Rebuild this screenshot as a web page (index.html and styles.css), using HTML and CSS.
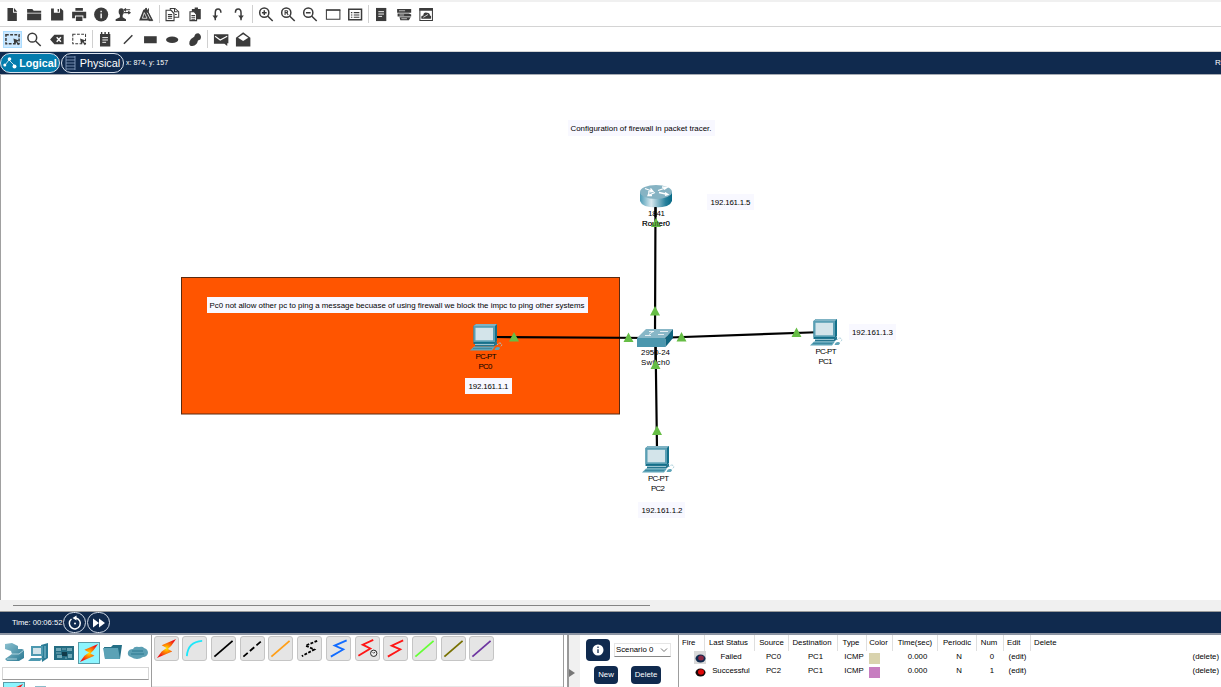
FILE: index.html
```html
<!DOCTYPE html>
<html lang="en">
<head>
<meta charset="utf-8">
<title>Packet Tracer</title>
<link rel="stylesheet" href="styles.css">
</head>
<body>
<svg class="defs" width="0" height="0">
  <defs>
    <linearGradient id="steel" x1="0" x2="1"><stop offset="0" stop-color="#4b9bb5"/><stop offset=".35" stop-color="#d9e9ef"/><stop offset=".8" stop-color="#27809c"/><stop offset="1" stop-color="#076985"/></linearGradient>
    <linearGradient id="teal" x1="0" x2="1" y2="1"><stop offset="0" stop-color="#8cc1d0"/><stop offset="1" stop-color="#2a7892"/></linearGradient>
    <radialGradient id="fire"><stop offset="0" stop-color="#ffe600"/><stop offset=".4" stop-color="#ff8a00"/><stop offset="1" stop-color="#f01818"/></radialGradient>
    <symbol id="pc" viewBox="0 0 34 28">
      <path d="M3.500 2 6 0H27V17L24 20H3.500Z" fill="#14708a"/><path d="M3.500 2 6 0H27L25 2Z" fill="#7fb3c4"/>
      <rect x="3.500" y="2" width="21.500" height="16" fill="#5a9fb4"/><rect x="5.500" y="3.800" width="17.500" height="12.500" fill="#d3e4ea"/>
      <path d="M5 19H24L27 17.500V20.500L24 22.500H5Z" fill="#25768f"/><path d="M5 20.500H24" stroke="#b9dbe4" stroke-width=".8"/>
      <path d="M4 22.500H25L22 26.500H0Z" fill="#5ea4b8"/><path d="M3 24.500H22" stroke="#327f97" stroke-width=".7"/>
      <path d="M24.500 26q1-3.500 4-3t0 3Z" fill="#5ea4b8"/><path d="M27 21q2-3 4-1.500t-1 3.500" fill="none" stroke="#a2cbd7" stroke-dasharray="2 1"/>
    </symbol>
    <symbol id="bolt" viewBox="0 0 22 22"><path d="M21 1 6 7.500 11 10.500 6 14 1 21 17 14 12.500 11.500 16 8Z" fill="url(#fire)"/></symbol>
  </defs>
</svg>
<div class="app">
  <div class="toolbar first">
    <svg class="ic" viewBox="0 0 16 16"><path d="M3 1H9V6H13V15H3Z"/><path d="M10 1 13.500 5H10Z"/></svg>
    <svg class="ic" viewBox="0 0 16 16"><path d="M.5 2H6L7.500 4H15.500V6H.5ZM.5 7H15.500V14H.5Z"/></svg>
    <svg class="ic" viewBox="0 0 16 16"><path fill-rule="evenodd" d="M1.500 1.500H12L14.500 4V14.500H1.500ZM4.500 1.500V6H11V1.500ZM8.500 2H10V5H8.500Z"/></svg>
    <svg class="ic" viewBox="0 0 16 16"><path fill-rule="evenodd" d="M4 1H12V4H4ZM.5 5H15.500V12H12.500V9H3.500V12H.5ZM4.500 10H11.500V15H4.500Z"/></svg>
    <svg class="ic" viewBox="0 0 16 16"><circle cx="8" cy="8" r="7.500"/><path d="M8 6.800V12M8 4V5.500" stroke="#fff" stroke-width="1.500"/></svg>
    <svg class="ic" viewBox="0 0 16 16"><ellipse cx="6" cy="5" rx="2.800" ry="3.700"/><path d="M0 15V13L4.500 11V8H7.500V11L11 13V15Z"/><path d="M9 3H15.500M9 6H15.500M11 1.500 9 3 11 4.500M13.500 4.500 15.500 6 13.500 7.500" class="s"/></svg>
    <svg class="ic" viewBox="0 0 16 16"><path d="M5 3 .5 14.500H11L7 3Z"/><path d="M8 1 15 14.500H11L6.500 3ZM10.500 1.500V5" stroke="#3b3b3b"/><path d="M4 12 6 6 9 12ZM9 6 12.500 13" fill="none" stroke="#fff" stroke-width=".8"/></svg>
    <i class="sep"></i>
    <svg class="ic" viewBox="0 0 16 16"><path d="M6 1.500H11L15 5V11H6Z" class="s"/><path d="M1.500 3.500H7L10 7V14.500H1.500Z" fill="#fff" stroke="#3b3b3b" stroke-width="1.200"/><path d="M3.500 8H8M3.500 10H8M3.500 12H8M10.500 2V5H14M11 8H13" class="s"/></svg>
    <svg class="ic" viewBox="0 0 16 16"><path d="M4.500 2H7.500V.5H11V2H14V13H4.500Z"/><path d="M2.500 5H7L9.500 8V14.500H2.500Z" fill="#fff" stroke="#3b3b3b" stroke-width="1.200"/><path d="M4 9H8M4 11H8M4 13H8" class="s"/></svg>
    <svg class="ic" viewBox="0 0 16 16"><path d="M6 14V6Q6 2 9 2T12 6" class="s b"/><path d="M3 9H9L6 13Z"/></svg>
    <svg class="ic" viewBox="0 0 16 16"><path d="M4 6Q4 2 7 2T10 6V14" class="s b"/><path d="M7 9H13L10 13Z"/></svg>
    <i class="sep"></i>
    <svg class="ic" viewBox="0 0 16 16"><circle cx="6" cy="6" r="4.900" class="s b"/><path d="M9.500 9.500 15 15M3.500 6H8.500M6 3.500V8.500" class="s b"/></svg>
    <svg class="ic" viewBox="0 0 16 16"><circle cx="6" cy="6" r="4.900" class="s b"/><path d="M9.500 9.500 15 15" class="s b"/><path d="M4.700 8.500V4H6.500Q7.500 4 7.500 5T6.500 6H5M6.500 6 8 8.500" class="s"/></svg>
    <svg class="ic" viewBox="0 0 16 16"><circle cx="6" cy="6" r="4.900" class="s b"/><path d="M9.500 9.500 15 15M3.500 6H8.500" class="s b"/></svg>
    <svg class="ic" viewBox="0 0 16 16"><path d="M.8 3H15.200V13H.8Z" class="s"/><path d="M.3 3.500H15.700" class="s" stroke-width="2"/></svg>
    <svg class="ic" viewBox="0 0 16 16"><path d="M1.200 2.500H14.800V13.500H1.200Z" class="s b"/><path d="M3.500 6H5M6.500 6H12.500M3.500 8.500H5M6.500 8.500H12.500M3.500 11H5M6.500 11H12.500" class="s"/></svg>
    <i class="sep"></i>
    <svg class="ic" viewBox="0 0 16 16"><path d="M2.500 1H13.500V15H2.500Z"/><path d="M5 5H11M5 7.500H11M5 10H9" stroke="#fff"/></svg>
    <svg class="ic" viewBox="0 0 16 16"><path d="M.5 2H15.500V6H.5ZM1 7H13L15.500 8V10H1ZM3 11H15L13 14H4Z"/><path d="M2.500 4H9M3 8.500H8M5 12.500H11" stroke="#fff" stroke-width=".7"/></svg>
    <svg class="ic" viewBox="0 0 16 16"><path d="M1.300 2H14.700V14.500H1.300Z" class="s"/><path d="M.8 1H15.200V4H.8ZM3 12.500Q2 9 5 9Q5 5 9 6Q12 6 12 9Q14 9 13 12.500Z"/><path d="M5 11 10 8" stroke="#fff" stroke-width=".8"/></svg>
  </div>
  <div class="toolbar second">
    <span class="picked"><svg class="ic" viewBox="0 0 16 16"><path d="M1 3H15V12.500H1Z" class="s b" stroke-dasharray="3 1.500"/><path d="M9 7 15 9 13 10 15 13 14 14 12 11 10 13Z"/></svg></span>
    <svg class="ic" viewBox="0 0 16 16"><circle cx="6" cy="6" r="4.700" class="s b"/><path d="M9.500 9.500 15 15" class="s b"/></svg>
    <svg class="ic" viewBox="0 0 16 16"><path d="M.5 8 5 3H15V13H5Z"/><path d="M7.500 5.500 12 10.500M12 5.500 7.500 10.500" stroke="#fff" stroke-width="1.500"/></svg>
    <svg class="ic" viewBox="0 0 16 16"><path d="M1.200 2.500H14.800V12.500H1.200Z" class="s" stroke-dasharray="3 1.500"/><path d="M9 7 15 9 13 10 15 13 14 14 12 11 10 13Z"/></svg>
    <i class="sep"></i>
    <svg class="ic" viewBox="0 0 16 16"><path d="M2.500 2H13.500V15.500H2.500ZM3.500 0H5V2H3.500ZM7.200 0H8.700V2H7.200ZM11 0H12.500V2H11Z"/><path d="M5 6H11M5 8.500H11M5 11H9" stroke="#fff"/></svg>
    <svg class="ic" viewBox="0 0 16 16"><path d="M3.500 12.500 12.500 3.500" class="s b"/></svg>
    <svg class="ic" viewBox="0 0 16 16"><path d="M1.500 4.500H15V12H1.500Z"/></svg>
    <svg class="ic" viewBox="0 0 16 16"><ellipse cx="8" cy="8.300" rx="6.500" ry="3.400"/></svg>
    <svg class="ic" viewBox="0 0 16 16"><path d="M7 5Q8 1 12 1.500Q15.500 4 13.500 8L11 9Q10 14 5 15Q1 15 2 10Q3 7 7 5Z"/></svg>
    <i class="sep"></i>
    <svg class="ic" viewBox="0 0 16 16"><path d="M.3 2.500H15.700V12H14.500V15L11.500 12.500H.3Z"/><path d="M1.500 4.500 7 8.500 14.500 4.500" fill="none" stroke="#fff" stroke-width="1.200"/></svg>
    <svg class="ic" viewBox="0 0 16 16"><path d="M.3 6 8 .3 15.700 6V15.500H.3Z"/><path d="M2.500 6 8 2.500 13.500 6 8 9.500Z" fill="#fff"/></svg>
  </div>
  <div class="modebar">
    <span class="mode on"><svg width="14" height="12" viewBox="0 0 14 12"><path d="M2 8 6 3 12 9" fill="none" stroke="#fff" stroke-width=".8"/><circle cx="1.800" cy="8" r="1.500"/><circle cx="6.500" cy="2" r="1.800"/><circle cx="11.500" cy="9.500" r="2"/></svg><b>Logical</b></span>
    <span class="mode"><svg width="11" height="14" viewBox="0 0 11 14"><path d="M1 0V14M10 0V14M1 1H10M1 4H10M1 7H10M1 10H10M1 13H10" stroke="#8fa6c8" stroke-width=".8"/></svg><span>Physical</span></span>
    <span class="coords">x: 874, y: 157</span><span class="root">R<small>o</small></span>
  </div>
  <svg class="topology" width="1221" height="525" viewBox="1 75 1220 525">
    <rect x="181.500" y="277.500" width="438" height="136.500" fill="#ff5500" stroke="#5a2a10"/>
    <g fill="#f8f8ff"><rect x="568" y="120" width="147" height="16"/><rect x="707" y="194" width="47" height="16"/><rect x="207" y="297" width="381" height="16"/><rect x="465" y="378" width="47" height="16"/><rect x="849" y="324" width="47" height="16"/><rect x="638" y="502" width="47" height="16"/></g>
    <g stroke="#000" stroke-width="2.200"><path d="M655.500 205 655 335M494 337 656 338M656 338 824 332M655.500 338 657 450"/></g>
    <g transform="translate(640 184)"><path d="M0 8V17Q2 23.500 16 23.500T32 17V8Z" fill="url(#steel)"/><ellipse cx="16" cy="8" rx="16" ry="7" fill="#86b3c3"/><path d="M5 4.500 13 7.500M10.500 4.500 13 7.500 8 8M27 3.500 18 6.500M22 3 27 3.500 24 5.500M19 8.500 28 10.500M25 11.500 28 10.500 25 8.500M15 8.500 8 11.500M9 9 8 11.500 12 11.500" fill="none" stroke="#fff" stroke-width="1.300"/></g>
    <path d="M655.500 207V217" stroke="#000" stroke-width="2.200"/>
    <use href="#pc" x="470" y="324" width="34" height="28"/>
    <use href="#pc" x="810" y="319" width="34" height="28"/>
    <use href="#pc" x="642" y="446" width="34" height="28"/>
    <g><path d="M637 338 646 329H673L665.500 338Z" fill="#88b7c7"/><path d="M637 338H665.500V347H637Z" fill="#4b97ae"/><path d="M665.500 338 673 329V338L665.500 347Z" fill="#10657e"/><path d="M649 334.500 653 331.500M649 331.500H654M645 335.500H651M658 334.500H664M660 331.500H668" stroke="#fff" stroke-width=".8"/></g>
    <g class="node"><text x="648" y="215.500" textLength="17">1841</text><text x="642" y="225.500" textLength="28">Router0</text><text x="641" y="355" textLength="29">2950-24</text><text x="641" y="365" textLength="29">Switch0</text><text x="475.500" y="359" textLength="21">PC-PT</text><text x="478.500" y="369" textLength="14">PC0</text><text x="815.500" y="354" textLength="21">PC-PT</text><text x="818.500" y="364" textLength="14">PC1</text><text x="648" y="481" textLength="21">PC-PT</text><text x="651" y="491" textLength="14">PC2</text></g>
    <path d="M655.500 347 655.700 365" stroke="#000" stroke-width="2.200"/>
    <g fill="#66bd45"><path d="M656 218 661 227H651ZM655 306 660 315.500H650ZM514 332 519 341.500H509ZM628.500 332.500 633.500 342H623.500ZM681.500 332 686.500 341.500H676.500ZM796.500 327.500 801.500 337H791.500ZM655.500 359.500 660.500 369H650.500ZM657 425.500 662 435H652Z"/></g>
    <g class="node"><text x="642" y="225.500" textLength="28" opacity=".55">Router0</text></g>
    <g class="node"><text x="570.500" y="130.500" textLength="141">Configuration of firewall in packet tracer.</text><text x="209.500" y="308" textLength="375">Pc0 not allow other pc to ping a message becuase of using firewall we block the impc to ping other systems</text><text x="710.500" y="205" textLength="40">192.161.1.5</text><text x="468.500" y="389" textLength="40">192.161.1.1</text><text x="852" y="335" textLength="41">192.161.1.3</text><text x="641.500" y="513" textLength="41">192.161.1.2</text></g>
  </svg>
  <div class="scroll"><i></i></div>
  <div class="timebar"><span>Time: 00:06:52</span>
    <span class="round"><svg width="16" height="16" viewBox="0 0 16 16"><path d="M4.500 4A5.500 5.500 0 1 0 9 3" fill="none" stroke="#fff" stroke-width="1.500"/><path d="M5.500 3 9.500 .5V5.500Z"/><circle cx="8" cy="8.500" r="1"/></svg></span>
    <span class="round"><svg width="14" height="12" viewBox="0 0 14 12"><path d="M1 1.500 7 6 1 10.500ZM7 1.500 13 6 7 10.500Z"/></svg></span>
  </div>
  <div class="dock">
    <div class="devices">
      <div class="kinds">
        <svg viewBox="0 0 22 22"><path d="M1 2 8 1 14 4V7H18L20 8V16L15 19H3L1 17 8 12 7 9 1 7Z" fill="url(#teal)"/><path d="M8 12H15L20 8M3 17H13" fill="none" stroke="#b6d7e1" stroke-width=".9"/></svg>
        <svg viewBox="0 0 22 22"><path d="M13 3 20 1V16L14 20Z" fill="#2b7c96"/><path d="M3 4H15V14H3ZM3 16H15L12 19H0Z" fill="#4d99b0"/><path d="M5 6H13V12H5Z" fill="#d3e4ea"/><path d="M17 4V16" stroke="#8fc4d4"/></svg>
        <svg viewBox="0 0 22 22"><path d="M1 4H21V18H1Z" fill="#246c82"/><path d="M3 6H8V9H3ZM14 6H19V9H14ZM4 13H9V16H4ZM15 12H19V16H15Z" fill="#70a8b7"/><path d="M9 10H14V14H9Z" fill="#123b4a"/><path d="M9 7H13M3 11H8M12 16H14" stroke="#a6cbd5" stroke-width=".7"/></svg>
        <span class="chosen"><svg viewBox="0 0 22 22"><use href="#bolt"/></svg></span>
        <svg viewBox="0 0 22 22"><path d="M2 5H9L11 3H20L18 17H3Z" fill="#246f86"/><path d="M1 6H16L18 17H3Z" fill="#5ba2b6"/></svg>
        <svg viewBox="0 0 22 22"><path d="M4 15Q0 14 1 10Q2 7 6 7Q7 4 12 5Q16 4 17 6Q21 7 21 11Q20 15 16 15Q10 19 4 15Z" fill="#5c9fb3"/><path d="M5 9H16M4 12H17" stroke="#2d7890"/></svg>
      </div>
      <div class="name"></div>
      <div class="subkinds"><span class="chosen"><svg viewBox="0 0 22 22"><use href="#bolt"/></svg></span><i></i></div>
    </div>
    <div class="cables">
      <svg viewBox="0 0 24 24"><use href="#bolt" x="1" y="1" width="22" height="22"/></svg>
      <svg viewBox="0 0 24 24"><path d="M4 20Q5 5 20 4" stroke="#1ee7fa"/></svg>
      <svg viewBox="0 0 24 24"><path d="M2.500 20.500 21.500 4" stroke="#000"/></svg>
      <svg viewBox="0 0 24 24"><path d="M2.500 20.500 21.500 4" stroke="#000" stroke-dasharray="6 3"/></svg>
      <svg viewBox="0 0 24 24"><path d="M2.500 20.500 21.500 4" stroke="#ff9e16"/></svg>
      <svg viewBox="0 0 24 24"><path d="M20 4 8 9 17 13 4 20" stroke="#000" stroke-dasharray="3 1.500"/></svg>
      <svg viewBox="0 0 24 24"><path d="M20.500 3.500 8 9 17 13 4 20.500" stroke="#126cff"/></svg>
      <svg viewBox="0 0 24 24"><path d="M18 3 7 8 15 12 2.500 19.500" stroke="#ff1616"/><circle cx="18.500" cy="17" r="3.300" fill="#eee" stroke="#222" stroke-width="1"/><path d="M17 15.500 18.500 17 20 15.500" stroke="#222" stroke-width=".8"/></svg>
      <svg viewBox="0 0 24 24"><path d="M20 3.500 8 9 17 13 4 20.500" stroke="#ff1616"/></svg>
      <svg viewBox="0 0 24 24"><path d="M2.500 20.500 21.500 4" stroke="#65ff35"/></svg>
      <svg viewBox="0 0 24 24"><path d="M2.500 20.500 21.500 4" stroke="#777000"/></svg>
      <svg viewBox="0 0 24 24"><path d="M2.500 20.500 21.500 4" stroke="#6d35a0"/></svg>
    </div>
    <div class="splitter"><svg width="7" height="8" viewBox="0 0 7 8"><path d="M0 0 6 4 0 8Z" fill="#777"/></svg></div>
    <div class="scenario">
      <div class="line"><span class="info"><svg width="12" height="12" viewBox="0 0 12 12"><circle cx="6" cy="6" r="5.500" fill="#fff"/><path d="M6 5.300V9M6 2.500V4" stroke="#102a4e" stroke-width="1.300"/></svg></span><span class="select"><span>Scenario 0</span><svg width="8" height="6" viewBox="0 0 8 6"><path d="M1 1.500 4 4.500 7 1.500" fill="none" stroke="#666" stroke-width=".9"/></svg></span></div>
      <div class="line btns"><span class="btn new">New</span><span class="btn del">Delete</span></div>
    </div>
    <div class="pdu">
      <div class="row head"><span class="l">Fire</span><span class="ls">Last Status</span><span>Source</span><span class="ls">Destination</span><span class="ls">Type</span><span class="ls">Color</span><span>Time(sec)</span><span>Periodic</span><span class="ls">Num</span><span class="e">Edit</span><span class="l">Delete</span></div>
      <div class="row"><span class="lamp sel"><svg width="11" height="9" viewBox="0 0 11 9"><ellipse cx="5.500" cy="4.500" rx="5" ry="4" fill="#102a4e"/><ellipse cx="6" cy="4" rx="2.800" ry="2.500" fill="#8c2843"/></svg></span><span class="st">Failed</span><span class="src">PC0</span><span class="dst">PC1</span><span class="src">ICMP</span><span class="sw"><i class="sand"></i></span><span class="tm">0.000</span><span class="src">N</span><span class="src">0</span><span>(edit)</span><span class="r">(delete)</span></div>
      <div class="row"><span class="lamp"><svg width="11" height="9" viewBox="0 0 11 9"><ellipse cx="5.500" cy="4.500" rx="5" ry="4" fill="#160808"/><ellipse cx="6" cy="4" rx="3" ry="2.700" fill="#e00808"/></svg></span><span class="st">Successful</span><span class="src">PC2</span><span class="dst">PC1</span><span class="src">ICMP</span><span class="sw"><i class="plum"></i></span><span class="tm">0.000</span><span class="src">N</span><span class="src">1</span><span>(edit)</span><span class="r">(delete)</span></div>
    </div>
  </div>
</div>
</body>
</html>
```
FILE: styles.css
```css
* { box-sizing: border-box; }
body { margin: 0; background: #fff; font: 7.8px/10px "Liberation Sans", Arial, sans-serif; color: #000; overflow: hidden; }
.defs { position: absolute; }
.app { width: 1221px; height: 687px; display: flex; flex-direction: column; overflow: hidden; }
.toolbar { display: flex; align-items: center; flex: none; padding-left: 1px; border-bottom: 1px solid #d4d4d4; }
.first { height: 27px; border-top: 2px solid #f0f0f0; }
.second { height: 25px; }
.ic { width: 22.3px; height: 15px; flex: none; fill: #3b3b3b; }
.s { fill: none; stroke: #3b3b3b; stroke-width: 1.1; }
.b { stroke-width: 1.6; }
.sep { width: 1px; height: 18px; background: #d0d0d0; margin: 0 1.6px; flex: none; }
.picked { display: flex; align-items: center; justify-content: center; width: 19px; height: 17px; margin: 0 1.3px 0 2px; background: #cce8ff; border: 1px solid #aadcff; flex: none; }
.picked .ic { width: 17px; }
.modebar { height: 23px; flex: none; display: flex; align-items: center; background: #102a4e; border-bottom: 1px solid #a6abb3; color: #fff; font-size: 7px; }
.mode { height: 20px; width: 63px; border: 1px solid #dbe3ee; border-radius: 10px; display: flex; align-items: center; justify-content: center; gap: 4px; font-size: 10.9px; flex: none; }
.mode.on { width: 60px; margin-right: 1px; background: #047cad; gap: 2px; font-size: 10.7px; }
.mode svg { fill: #fff; flex: none; }
.coords { margin-left: 2px; white-space: nowrap; }
.root { margin-left: auto; width: 6px; white-space: nowrap; font-size: 8px; }
.root small { font-size: 8px; }
.topology { display: block; flex: none; height: 525px; border-left: 1px solid #a0a0a0; }
.node { font-size: 7.9px; }
.scroll { height: 12px; flex: none; background: #f0f0f0; border-bottom: 1px solid #9b9b9b; padding: 5px 0 0 13px; }
.scroll i { display: block; width: 637px; height: 1px; background: #858585; }
.timebar { height: 23px; flex: none; display: flex; align-items: center; padding-left: 12px; background: #102a4e; border-bottom: 2px solid #8d95a3; color: #fff; font-size: 7.6px; }
.timebar > span:first-child { width: 51px; white-space: nowrap; }
.round { width: 23px; height: 21px; margin-right: 1px; border: 1px solid #d4dce8; border-radius: 11px; display: flex; align-items: center; justify-content: center; flex: none; }
.round svg { fill: #fff; }
.dock { flex: none; height: 52px; display: flex; }
.devices { width: 151px; height: 52px; flex: none; overflow: hidden; }
.kinds { display: flex; gap: 2.7px; padding: 7px 0 0 3.5px; }
.kinds svg { width: 22px; height: 22px; flex: none; }
.chosen { width: 22px; height: 22px; background: #8df5ff; border: 1px solid #5a9ca8; display: flex; flex: none; }
.kinds .chosen svg, .chosen svg { width: 20px; height: 20px; }
.name { margin: 3px 0 0 2px; width: 147px; height: 13px; border: 1px solid #d5d5d5; border-bottom-color: #999; }
.subkinds { display: flex; padding: 2px 0 0 3px; gap: 10px; }
.subkinds i { width: 11px; height: 2px; margin-top: 4px; background: #8cbccb; }
.cables { width: 413px; height: 52px; flex: none; display: flex; gap: 3.73px; padding: 1px 0 0 1.5px; border: solid #9d9d9d; border-width: 0 1px 0 1px; box-shadow: inset 0 -1px #e7e7e7; }
.cables svg { width: 25px; height: 25px; flex: none; background: #e5e5e5; border: 1px solid #c5c5c5; border-radius: 3px; fill: none; stroke-width: 1.9; }
.splitter { margin-left: 3px; width: 13px; flex: none; border-left: 2px solid #999; background: #f0f0f0; padding: 34px 0 0; }
.splitter svg { display: block; }
.scenario { width: 98px; flex: none; padding: 4px 0 0 6px; }
.line { display: flex; align-items: center; gap: 4px; }
.info { width: 24px; height: 22px; border-radius: 4px; background: #102a4e; display: flex; align-items: center; justify-content: center; }
.select { width: 57px; height: 14px; display: flex; align-items: center; justify-content: space-between; padding: 0 2px 0 1px; border: 1px solid #e5e5e5; border-bottom-color: #888; white-space: nowrap; }
.btns { padding: 5px 0 0 8px; gap: 13px; }
.btn { height: 18px; line-height: 18px; border-radius: 4px; background: #102a4e; color: #fff; text-align: center; }
.new { width: 24px; }
.del { width: 30px; }
.pdu { flex: 1; border-left: 1px solid #9d9d9d; }
.row { display: grid; grid-template-columns: 26px 50px 34px 49px 29px 26px 45px 39px 27px 27px 1fr; height: 14px; text-align: center; white-space: nowrap; }
.row > span { line-height: 13px; }
.row.head { height: 15px; }
.row.head > span { line-height: 16px; border-right: 1px solid #dfdfdf; }
.row.head > span:last-child { border: 0; }
.ls { padding-right: 2px; }
.l { text-align: left; padding-left: 3px; }
.e { text-align: left; padding-left: 3px; }
.st { padding-left: 2px; }
.src { padding-left: 3px; }
.tm { padding-left: 4px; }
.dst { padding-left: 4px; }
.r { text-align: right; padding-right: 2px; }
.lamp { display: flex; justify-content: flex-end; align-items: center; margin-right: -1px; padding-top: 2px; }
.lamp.sel { margin: 1px -1px 0 15px; background: #d9d9d9; }
.sw { padding: 3px 0 0 2px; }
.sw i { display: block; width: 11px; height: 11px; }
.sand { background: #d9d3ae; }
.plum { background: #c77dc0; }
```
